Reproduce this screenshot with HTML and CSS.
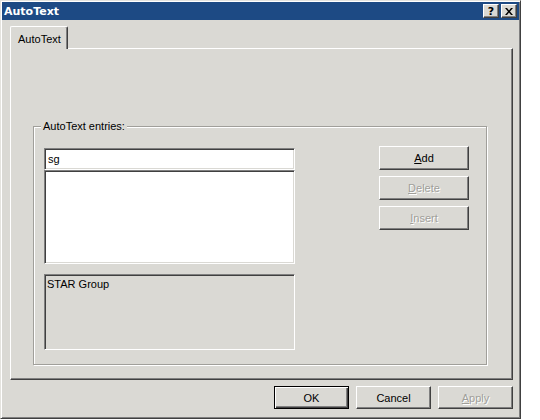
FILE: index.html
```html
<!DOCTYPE html>
<html>
<head>
    <title>AutoText</title>
    <link rel="stylesheet" href="styles.css">
</head>
<body>
    <div class="dialog">
        <div class="titlebar">
            <span class="title">AutoText</span>
            <div class="caption-btns">
                <span class="cap-btn">?</span>
                <span class="cap-btn">
                    <svg width="8" height="7" viewBox="0 0 8 7"><path d="M0 0h2l2 2.5L6 0h2L5 3.5 8 7H6L4 4.5 2 7H0l3-3.5z" fill="#000"/></svg>
                </span>
            </div>
        </div>

        <div class="tabs">
            <div class="tab">AutoText</div>
        </div>

        <div class="panel">
            <fieldset class="group">
                <legend>AutoText entries:</legend>
                <div class="entries">
                    <div class="entry-col">
                        <div class="field">sg</div>
                        <div class="list"></div>
                        <div class="preview">STAR Group</div>
                    </div>
                    <div class="btn-col">
                        <button type="button" class="btn"><u>A</u>dd</button>
                        <button type="button" class="btn" disabled><u>D</u>elete</button>
                        <button type="button" class="btn" disabled><u>I</u>nsert</button>
                    </div>
                </div>
            </fieldset>
        </div>

        <div class="footer">
            <button type="button" class="btn btn-default">OK</button>
            <button type="button" class="btn">Cancel</button>
            <button type="button" class="btn" disabled><u>A</u>pply</button>
        </div>
    </div>
</body>
</html>
```

FILE: styles.css
```css
body {
    margin: 0;
    background-color: #fff;
    font-family: "Liberation Sans", Arial, sans-serif;
    font-size: 11px;
    color: #000;
}
.dialog {
    box-sizing: border-box;
    width: 521px;
    height: 419px;
    padding: 1px;
    background-color: #dad9d4;
    border: 1px solid;
    border-color: #e4e3de #404040 #404040 #e4e3de;
    box-shadow: inset 1px 1px #fff, inset -1px -1px #808080;
}
.titlebar {
    height: 18px;
    display: flex;
    align-items: center;
    justify-content: space-between;
    background-color: #1d4a84;
    padding: 0 2px 0 2px;
}
.title {
    color: #fff;
    font-family: "DejaVu Sans", sans-serif;
    font-weight: bold;
    font-size: 11px;
}
.caption-btns {
    display: flex;
    gap: 2px;
}
.cap-btn {
    box-sizing: border-box;
    width: 16px;
    height: 14px;
    display: flex;
    align-items: center;
    justify-content: center;
    background-color: #dad9d4;
    border: 1px solid;
    border-color: #fff #404040 #404040 #fff;
    box-shadow: inset -1px -1px #808080;
    font-family: "DejaVu Sans", sans-serif;
    font-weight: bold;
    font-size: 11px;
    line-height: 1;
}
.tabs {
    display: flex;
    padding: 6px 0 0 8px;
}
.tab {
    position: relative;
    z-index: 1;
    box-sizing: border-box;
    width: 58px;
    height: 23px;
    margin-bottom: -1px;
    padding: 6px 0 0 7px;
    background-color: #dad9d4;
    border: 1px solid;
    border-color: #fff #404040 transparent #fff;
    border-bottom: none;
    border-radius: 2px 2px 0 0;
    box-shadow: inset -1px 0 #808080;
}
.panel {
    box-sizing: border-box;
    height: 332px;
    margin: 0 6px 0 8px;
    padding: 71px 25px 0 22px;
    border: 1px solid;
    border-color: #fff #404040 #404040 #fff;
    box-shadow: inset -1px -1px #808080;
}
.group {
    box-sizing: border-box;
    height: 245px;
    margin: 0;
    padding: 0 17px 0 10px;
    border: 1px solid #a09f9a;
    box-shadow: inset 1px 1px #fff, 1px 1px #fff;
}
.group legend {
    padding: 0 2px;
    margin-left: -3px;
    background-color: #dad9d4;
    line-height: 13px;
}
.entries {
    display: flex;
    justify-content: space-between;
    margin-top: 13px;
}
.entry-col {
    display: flex;
    flex-direction: column;
    width: 251px;
    margin-top: 2px;
}
.field,
.list,
.preview {
    box-sizing: border-box;
    border: 1px solid;
    border-color: #808080 #fff #fff #808080;
    box-shadow: inset 1px 1px #404040, inset -1px -1px #dad9d4;
}
.field {
    height: 22px;
    padding: 4px 3px;
    background-color: #fff;
}
.list {
    height: 94px;
    background-color: #fff;
}
.preview {
    height: 76px;
    margin-top: 10px;
    padding: 3px 2px;
    background-color: #dad9d4;
}
.btn-col {
    display: flex;
    flex-direction: column;
    gap: 6px;
    width: 90px;
}
.btn {
    box-sizing: border-box;
    height: 24px;
    width: 90px;
    padding: 0;
    background-color: #dad9d4;
    font-family: "Liberation Sans", Arial, sans-serif;
    font-size: 11px;
    color: #000;
    border: 1px solid;
    border-color: #fff #404040 #404040 #fff;
    box-shadow: inset -1px -1px #808080;
    border-radius: 0;
}
.btn:disabled {
    color: #a09f9a;
    text-shadow: 1px 1px #fff;
}
.footer {
    display: flex;
    justify-content: flex-end;
    gap: 7px;
    margin-top: 6px;
    padding-right: 6px;
}
.footer .btn {
    width: 75px;
    height: 23px;
}
.btn-default {
    border: 1px solid #000;
    box-shadow: inset 1px 1px #fff, inset -1px -1px #404040, inset -2px -2px #808080;
}
```
